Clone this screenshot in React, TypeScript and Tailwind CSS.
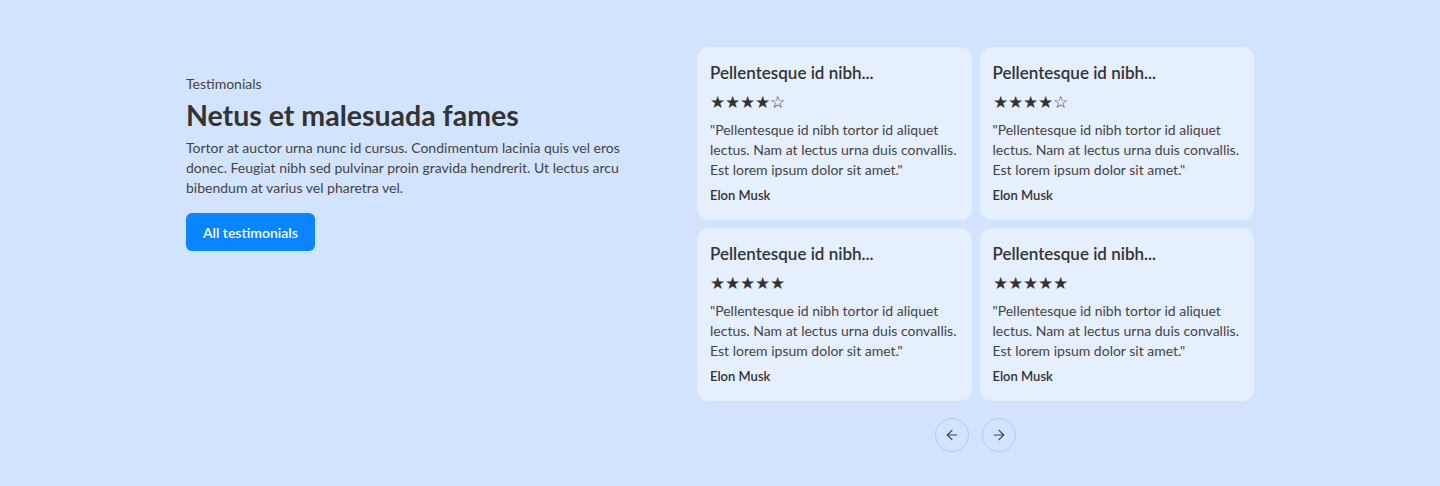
import { ArrowLeft, ArrowRight } from 'lucide-react';

const cards = [
  { title: 'Pellentesque id nibh...', rating: 4 },
  { title: 'Pellentesque id nibh...', rating: 4 },
  { title: 'Pellentesque id nibh...', rating: 5 },
  { title: 'Pellentesque id nibh...', rating: 5 },
];

function Stars({ rating }: { rating: number }) {
  return (
    <div className="mt-[9px] text-[17px] leading-[20px] text-[#333333]">
      {'★★★★★'.slice(0, rating)}
      {'☆☆☆☆☆'.slice(0, 5 - rating)}
    </div>
  );
}

function TestimonialCard({ title, rating }: { title: string; rating: number }) {
  return (
    <div className="h-[173px] rounded-xl bg-[#e5effe] px-[13px] pt-[16px]">
      <h3 className="text-[17px] font-semibold leading-[20px] text-[#333333]">{title}</h3>
      <Stars rating={rating} />
      <p className="mt-[8px] text-[14px] leading-[20px] text-[#444444]">
        "Pellentesque id nibh tortor id aliquet lectus. Nam at lectus urna duis convallis. Est
        lorem ipsum dolor sit amet."
      </p>
      <p className="mt-[5px] text-[13px] font-semibold leading-[20px] text-[#333333]">Elon Musk</p>
    </div>
  );
}

export default function App() {
  return (
    <section
      className="min-h-[486px] w-full bg-[#d2e3fd] pt-[47px]"
      style={{ fontFamily: 'Lato, "Noto Sans", sans-serif' }}
    >
      <div className="mx-auto flex w-[1068px] justify-between">
        {/* Left column: heading + intro */}
        <div className="w-[450px] pt-[28px]">
          <span className="block text-[14px] leading-[18px] text-[#444444]">Testimonials</span>
          <h2 className="mt-[6px] text-[28.5px] font-bold leading-[32px] text-[#333333]">
            Netus et malesuada fames
          </h2>
          <p className="mt-[7px] text-[14px] leading-[20px] text-[#444444]">
            Tortor at auctor urna nunc id cursus. Condimentum lacinia quis vel eros donec. Feugiat
            nibh sed pulvinar proin gravida hendrerit. Ut lectus arcu bibendum at varius vel
            pharetra vel.
          </p>
          <button className="mt-[15px] h-[38px] rounded-md bg-[#0a84ff] px-[17px] text-[14px] font-semibold text-white">
            All testimonials
          </button>
        </div>

        {/* Right column: card grid + pager */}
        <div className="w-[557px]">
          <div className="grid grid-cols-2 gap-[8px]">
            {cards.map((c, i) => (
              <TestimonialCard key={i} title={c.title} rating={c.rating} />
            ))}
          </div>
          <div className="mt-[17px] flex justify-center gap-[13px]">
            <button className="flex h-[34px] w-[34px] items-center justify-center rounded-full border border-[#b9cbe6] text-[#444444]">
              <ArrowLeft size={16} strokeWidth={1.75} />
            </button>
            <button className="flex h-[34px] w-[34px] items-center justify-center rounded-full border border-[#b9cbe6] text-[#444444]">
              <ArrowRight size={16} strokeWidth={1.75} />
            </button>
          </div>
        </div>
      </div>
    </section>
  );
}
